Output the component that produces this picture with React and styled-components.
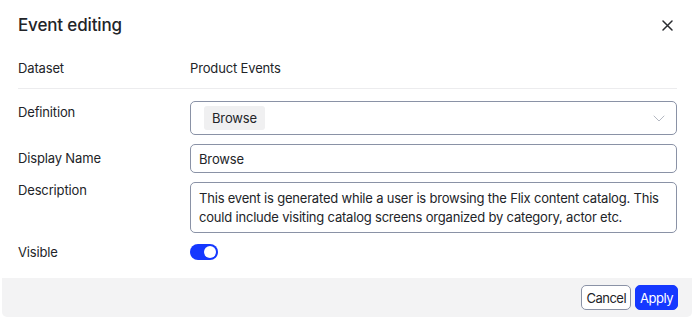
import React, { useState } from "react";
import styled, { createGlobalStyle } from "styled-components";

const COLORS = {
  text: "#222428",
  border: "#8a92a6",
  divider: "#ececee",
  chip: "#f0f0f1",
  footer: "#f3f3f4",
  primary: "#1538ff",
};

const GlobalStyle = createGlobalStyle`
  html, body {
    margin: 0;
    padding: 0;
    background: #ffffff;
  }
  body {
    font-family: Inter, "Noto Sans", sans-serif;
    color: ${COLORS.text};
    -webkit-font-smoothing: antialiased;
  }
`;

const CloseIcon = () => (
  <svg width="11" height="11" viewBox="0 0 11 11" fill="none">
    <path
      d="M1 1L10 10M10 1L1 10"
      stroke="#2a2c30"
      strokeWidth="1.5"
      strokeLinecap="round"
    />
  </svg>
);

const ChevronIcon = () => (
  <svg width="12" height="7" viewBox="0 0 12 7" fill="none">
    <path
      d="M1 1L6 6L11 1"
      stroke="#b4b8c2"
      strokeWidth="1"
      strokeLinecap="round"
      strokeLinejoin="round"
    />
  </svg>
);

export default function App() {
  const [visible, setVisible] = useState(true);
  const [name, setName] = useState("Browse");

  return (
    <>
      <GlobalStyle />
      <Modal>
        <Header>
          <Title>Event editing</Title>
          <CloseButton aria-label="close">
            <CloseIcon />
          </CloseButton>
        </Header>

        <Body>
          <DatasetRow>
            <Label>Dataset</Label>
            <Value>Product Events</Value>
          </DatasetRow>

          <Fields>
            <Field>
              <Label $offset={1}>Definition</Label>
              <Select>
                <Chip>Browse</Chip>
                <ChevronIcon />
              </Select>
            </Field>

            <Field>
              <Label $offset={4}>Display Name</Label>
              <Input
                value={name}
                onChange={(ev) => setName(ev.target.value)}
              />
            </Field>

            <Field>
              <Label $offset={-2}>Description</Label>
              <TextBox>
                This event is generated while a user is browsing the Flix
                content catalog. This
                <br />
                could include visiting catalog screens organized by category,
                actor etc.
              </TextBox>
            </Field>

            <Field $center>
              <Label>Visible</Label>
              <Toggle
                $on={visible}
                aria-label="visible"
                onClick={() => setVisible(!visible)}
              >
                <Knob $on={visible} />
              </Toggle>
            </Field>
          </Fields>
        </Body>

        <Footer>
          <Button>Cancel</Button>
          <Button $primary>Apply</Button>
        </Footer>
      </Modal>
    </>
  );
}

const Modal = styled.div`
  width: 694px;
  height: 318px;
  display: flex;
  flex-direction: column;
  box-sizing: border-box;
`;

const Header = styled.div`
  display: flex;
  align-items: center;
  justify-content: space-between;
  box-sizing: border-box;
  height: 48px;
  padding: 2px 21px 0 18px;
`;

const Title = styled.h2`
  margin: 0;
  font-size: 17px;
  font-weight: 500;
  letter-spacing: -0.15px;
  color: ${COLORS.text};
`;

const CloseButton = styled.button`
  all: unset;
  display: flex;
  cursor: pointer;
`;

const Body = styled.div`
  padding: 0 17px 0 18px;
  flex: 1;
`;

const DatasetRow = styled.div`
  display: grid;
  grid-template-columns: 172px 1fr;
  align-items: center;
  height: 40px;
  border-bottom: 1px solid ${COLORS.divider};
`;

const Fields = styled.div`
  display: flex;
  flex-direction: column;
  gap: 9px;
  padding-top: 12px;
`;

const Field = styled.div`
  display: grid;
  grid-template-columns: 172px 1fr;
  align-items: ${(p) => (p.$center ? "center" : "start")};
`;

const Label = styled.div`
  font-size: 13px;
  line-height: 20px;
  letter-spacing: -0.15px;
  margin-top: ${(p) => p.$offset || 0}px;
`;

const Value = styled.div`
  font-size: 13px;
  line-height: 20px;
  letter-spacing: -0.15px;
`;

const Select = styled.div`
  display: flex;
  align-items: center;
  justify-content: space-between;
  height: 34px;
  box-sizing: border-box;
  padding: 0 11px 0 13px;
  border: 1px solid ${COLORS.border};
  border-radius: 5px;
`;

const Chip = styled.span`
  background: ${COLORS.chip};
  border-radius: 3px;
  padding: 2px 8px;
  font-size: 13px;
  line-height: 20px;
  letter-spacing: -0.15px;
`;

const Input = styled.input`
  all: unset;
  box-sizing: border-box;
  height: 29px;
  padding: 0 8px;
  border: 1px solid ${COLORS.border};
  border-radius: 5px;
  font-family: Inter, "Noto Sans", sans-serif;
  font-size: 13px;
  letter-spacing: -0.15px;
  color: ${COLORS.text};
`;

const TextBox = styled.div`
  box-sizing: border-box;
  height: 51px;
  padding: 6px 8px 0;
  border: 1px solid ${COLORS.border};
  border-radius: 5px;
  font-size: 13px;
  line-height: 19px;
  letter-spacing: -0.2px;
  white-space: nowrap;
  overflow: hidden;
`;

const Toggle = styled.button`
  all: unset;
  cursor: pointer;
  width: 28px;
  height: 16px;
  border-radius: 8px;
  background: ${(p) => (p.$on ? COLORS.primary : "#c5c8d0")};
  display: flex;
  align-items: center;
  padding: 0 2px;
  box-sizing: border-box;
  justify-content: ${(p) => (p.$on ? "flex-end" : "flex-start")};
`;

const Knob = styled.span`
  width: 12px;
  height: 12px;
  border-radius: 50%;
  background: #ffffff;
`;

const Footer = styled.div`
  display: flex;
  justify-content: flex-end;
  align-items: center;
  gap: 4px;
  height: 39px;
  margin: 0 2px 1px;
  padding: 0 14px;
  background: ${COLORS.footer};
  border-radius: 0 0 5px 5px;
`;

const Button = styled.button`
  height: 25px;
  padding: 0 4px;
  box-sizing: border-box;
  border-radius: 5px;
  font-family: Inter, "Noto Sans", sans-serif;
  font-size: 13px;
  letter-spacing: -0.5px;
  cursor: pointer;
  border: 1px solid ${(p) => (p.$primary ? COLORS.primary : COLORS.border)};
  background: ${(p) => (p.$primary ? COLORS.primary : "#ffffff")};
  color: ${(p) => (p.$primary ? "#ffffff" : COLORS.text)};
`;
